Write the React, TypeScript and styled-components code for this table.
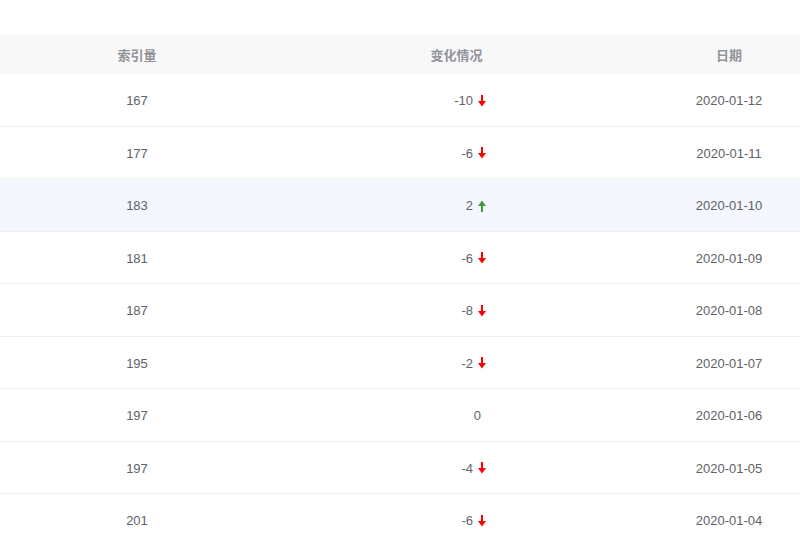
import React from "react";
import styled, { createGlobalStyle } from "styled-components";

const GlobalStyle = createGlobalStyle`
  html, body {
    margin: 0;
    padding: 0;
    background: #ffffff;
    font-family: "Liberation Sans", "Noto Sans CJK SC", sans-serif;
  }
  * { box-sizing: border-box; }
`;

const Page = styled.div`
  width: 800px;
  height: 539px;
  overflow: hidden;
  padding-top: 34px;
  background: #ffffff;
`;

const Grid = styled.div`
  display: grid;
  grid-template-columns: 274px 365px 161px;
`;

const HeaderRow = styled(Grid)`
  height: 40px;
  background: #f8f8f8;
`;

const HeaderCell = styled.div<{ $shift?: number }>`
  display: flex;
  align-items: center;
  justify-content: center;
  padding-left: ${(p) => p.$shift ?? 0}px;
  font-family: "Noto Sans CJK SC", "Liberation Sans", sans-serif;
  font-size: 13px;
  font-weight: 700;
  color: #909399;
`;

const Row = styled(Grid)<{ $hover?: boolean }>`
  height: 52.5px;
  border-bottom: 1px solid #eeeff2;
  background: ${(p) => (p.$hover ? "#f4f7fd" : "#ffffff")};
`;

const Cell = styled.div<{ $shift?: number }>`
  display: flex;
  align-items: center;
  justify-content: center;
  padding-top: 2px;
  padding-left: ${(p) => p.$shift ?? 0}px;
  font-size: 13px;
  color: #606266;
`;

const ChangeCell = styled.div`
  display: flex;
  align-items: center;
  justify-content: flex-end;
  padding-top: 2px;
  padding-right: 154px;
  font-size: 13px;
  color: #606266;
`;

const ArrowBox = styled.span`
  display: inline-flex;
  width: 8px;
  height: 12px;
  margin-left: 5px;
  margin-right: -1px;
`;

const Spacer = styled.span`
  display: inline-block;
  width: 4px;
`;

function Arrow({ up }: { up: boolean }) {
  const color = up ? "#3d9a3d" : "#ff0000";
  return (
    <ArrowBox>
      <svg width="8" height="12" viewBox="0 0 8 12">
        {up ? (
          <>
            <rect x="3" y="5" width="2" height="7" fill={color} />
            <polygon points="0,6 8,6 4,0.5" fill={color} />
          </>
        ) : (
          <>
            <rect x="3" y="0" width="2" height="7" fill={color} />
            <polygon points="0,6 8,6 4,11.5" fill={color} />
          </>
        )}
      </svg>
    </ArrowBox>
  );
}

const rows = [
  { idx: 167, change: -10, date: "2020-01-12" },
  { idx: 177, change: -6, date: "2020-01-11" },
  { idx: 183, change: 2, date: "2020-01-10" },
  { idx: 181, change: -6, date: "2020-01-09" },
  { idx: 187, change: -8, date: "2020-01-08" },
  { idx: 195, change: -2, date: "2020-01-07" },
  { idx: 197, change: 0, date: "2020-01-06" },
  { idx: 197, change: -4, date: "2020-01-05" },
  { idx: 201, change: -6, date: "2020-01-04" },
];

export default function App() {
  return (
    <>
      <GlobalStyle />
      <Page>
        <HeaderRow>
          <HeaderCell>索引量</HeaderCell>
          <HeaderCell>变化情况</HeaderCell>
          <HeaderCell $shift={19}>日期</HeaderCell>
        </HeaderRow>
        {rows.map((r, i) => (
          <Row key={i} $hover={i === 2}>
            <Cell>{r.idx}</Cell>
            <ChangeCell>
              {r.change}
              {r.change !== 0 ? <Arrow up={r.change > 0} /> : <Spacer />}
            </ChangeCell>
            <Cell $shift={19}>{r.date}</Cell>
          </Row>
        ))}
      </Page>
    </>
  );
}
